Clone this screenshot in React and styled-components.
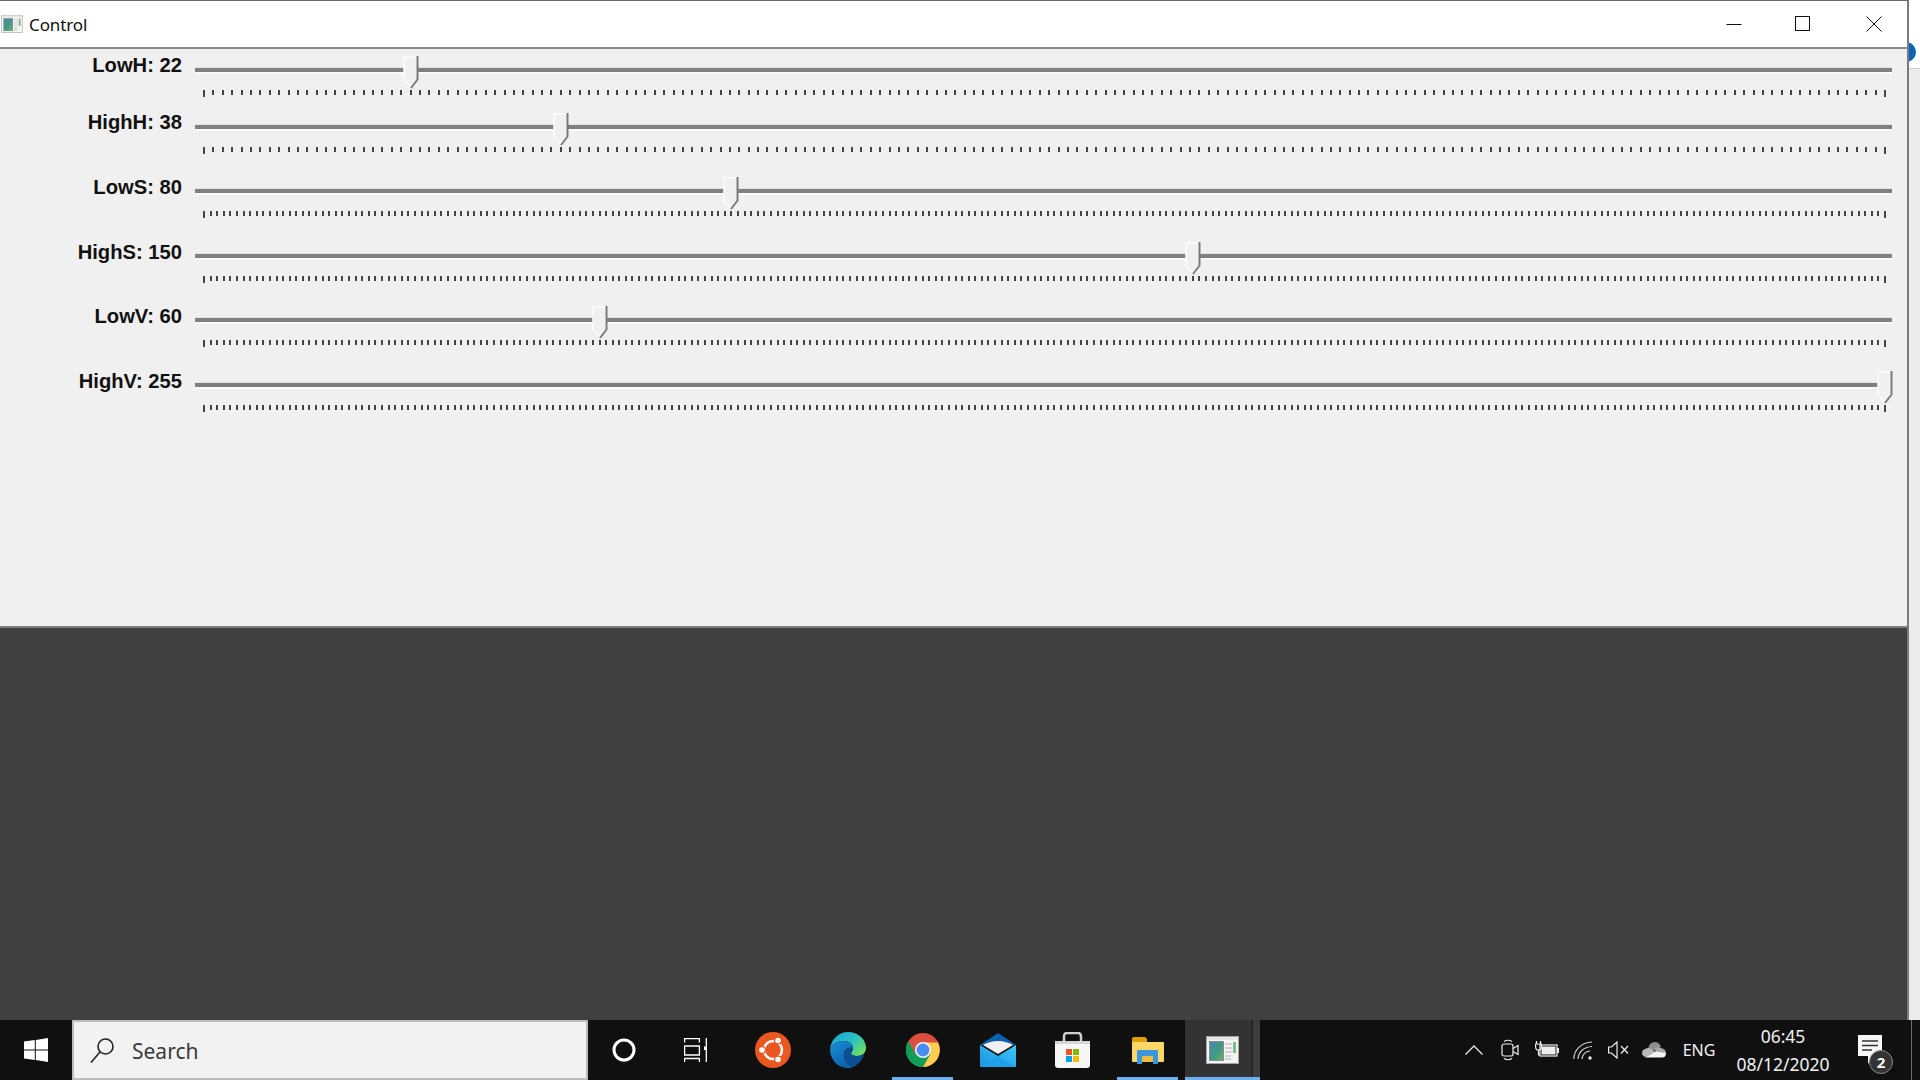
import React from "react";
import styled, { createGlobalStyle } from "styled-components";

const Global = createGlobalStyle`
  html, body { margin: 0; padding: 0; background: #eeeeee; }
  #root { width: 1920px; height: 1080px; overflow: hidden; }
`;

const Screen = styled.div`
  width: 1920px; height: 1080px; display: flex; flex-direction: column;
  font-family: "Noto Sans", "Open Sans", sans-serif;
`;
const Desktop = styled.div`flex: 1; min-height: 0; display: flex;`;
const Win = styled.div`
  width: 1909px; display: flex; flex-direction: column;
  border-top: 1px solid #6a6a6a; border-right: 2px solid #7b7b7b; box-sizing: border-box;
`;
const TitleBar = styled.div`
  height: 46px; flex: none; background: #fff; display: flex; align-items: center;
  border-bottom: 2px solid #8a8a8a;
`;
const AppGlyph = styled.div`margin: 0 6px 0 1px; width: 22px; height: 18px; display: flex;`;
const Title = styled.span`font-size: 17px; color: #111; letter-spacing: -0.1px;`;
const WinControls = styled.div`margin-left: auto; display: flex; height: 100%;`;
const WinButton = styled.div`
  width: ${p => p.$w}px; display: flex; align-items: center; justify-content: center;
`;
const Controls = styled.div`
  height: 579px; flex: none; background: #f0f0f0; box-sizing: border-box;
  border-bottom: 2px solid #7d7d7d; display: flex; flex-direction: column;
`;
const Row = styled.div`
  height: ${p => p.$h}px; flex: none; display: flex; align-items: flex-start;
`;
const Label = styled.div`
  width: 182px; margin-top: ${p => p.$top}px; text-align: right; flex: none;
  font: bold 20.2px/24px "Liberation Sans", Arial, sans-serif; color: #111;
`;
const Slider = styled.div`
  position: relative; margin-left: 13px; width: 1697px; height: 100%;
  display: flex; flex-direction: column;
`;
const Track = styled.div`
  margin-top: 19px; height: 4px; background: #808080; flex: none;
  box-shadow: 0 2px 0 #fbfbfb, 0 -1px 0 #e2e2e2;
`;
const TickScale = styled.svg`
  display: block; flex: none; margin: 18px 0 0 8px; width: 1683px; height: 7px;
`;
const Thumb = styled.svg`
  position: absolute; top: 7px; width: 16px; height: 33px; margin-left: -7px;
`;
const Viewport = styled.div`flex: 1; background: #404040;`;
const Gutter = styled.div`
  position: relative; flex: 1; overflow: hidden;
  background: linear-gradient(#fff 0 68px, #cfcfcf 68px 69px, #ececec 69px);
`;
const Dot = styled.div`
  position: absolute; left: -13px; top: 42px; width: 20px; height: 20px; border-radius: 50%; background: #0a63b4;
`;

const Taskbar = styled.div`
  height: 60px; flex: none; background: #101010; display: flex; align-items: stretch;
`;
const Start = styled.div`width: 72px; display: flex; align-items: center; justify-content: center;`;
const SearchBox = styled.div`
  width: 516px; box-sizing: border-box; background: #f2f2f2; border: 2px solid #bcbcbc;
  display: flex; align-items: center; padding-left: 16px; gap: 18px;
  font-size: 21px; color: #3a3a3a;
`;
const SearchText = styled.span`padding-top: 2px;`;
const Slot = styled.div`
  position: relative; width: ${p => p.$w}px; flex: none; display: flex; align-items: center; justify-content: center;
  margin-right: ${p => p.$gap || 0}px;
  background: ${p => (p.$active ? "#333333" : "transparent")};
`;
const Stripe = styled.div`position: absolute; top: 0; bottom: 0; right: 0; width: 7px; background: #3d3d3d; border-left: 2px solid #262626;`;
const Under = styled.div`
  position: absolute; bottom: 0; height: 3px; background: #6cb0f0;
  left: ${p => (p.$full ? 0 : 7)}px; right: ${p => (p.$full ? 0 : 7)}px;
`;
const Spacer = styled.div`flex: 1;`;
const EndGap = styled.div`flex: 0 0 12px;`;
const Lang = styled.span`font-size: 16px; color: #f2f2f2;`;
const Clock = styled.div`
  display: flex; flex-direction: column; align-items: center; gap: 5px; color: #f2f2f2;
  font-size: 17.5px; line-height: 23px;
`;
const Badge = styled.div`
  position: absolute; left: 28px; top: 30px; width: 24px; height: 24px; box-sizing: border-box; border-radius: 50%;
  background: #333; border: 1px solid #8a8a8a; color: #fff; font-size: 15px; font-weight: 700;
  display: flex; align-items: center; justify-content: center;
`;
const EdgeLine = styled.div`width: 1px; background: #6a6a6a; flex: none; margin-right: 8px;`;

const AppIcon = ({ w, h, id }) => (
  <svg width={w} height={h} viewBox="0 0 33 28">
    <defs>
      <linearGradient id={id} x1="0" y1="0" x2="1" y2="1">
        <stop offset="0" stopColor="#4b86ad" /><stop offset="0.55" stopColor="#3f9a86" /><stop offset="1" stopColor="#6eae68" />
      </linearGradient>
    </defs>
    <rect x="0.5" y="0.5" width="32" height="27" fill="#f4f4f4" stroke="#a5a5a5" />
    <rect x="1" y="1" width="31" height="3" fill="#e6e6e6" />
    <rect x="3" y="5" width="15" height="20" fill="#8d8d8d" />
    <rect x="4" y="6" width="13" height="18" fill={`url(#${id})`} />
    <rect x="19" y="7" width="7" height="2" fill="#d2d2d2" /><rect x="19" y="11" width="7" height="2" fill="#d2d2d2" />
    <rect x="19" y="15" width="7" height="2" fill="#d2d2d2" /><rect x="19" y="19" width="6" height="2" fill="#d2d2d2" />
    <rect x="19" y="22" width="6" height="2" fill="#d2d2d2" />
    <rect x="27" y="6" width="3" height="11" fill="#7fb98d" />
  </svg>
);

const Edge = () => (
  <svg width="36" height="36" viewBox="0 0 36 36">
    <defs>
      <linearGradient id="e1" x1="0.1" y1="0.1" x2="1" y2="0.7">
        <stop offset="0" stopColor="#1fa5d8" /><stop offset="0.55" stopColor="#2cc3c0" /><stop offset="1" stopColor="#6fdc62" />
      </linearGradient>
      <linearGradient id="e2" x1="0" y1="0" x2="0.6" y2="1">
        <stop offset="0" stopColor="#1a8fd8" /><stop offset="1" stopColor="#0b62ab" />
      </linearGradient>
    </defs>
    <path d="M0 17C1 7 9 0 18 0c10 0 18 7 18 16 0 5-4 8-9 8-3 0-6-1-6-3 0-1 2-2 2-5 0-4-4-7-9-7C7 9 2 12 0 17z" fill="url(#e1)" />
    <path d="M0 17c2-5 7-8 14-8 5 0 9 3 9 7-3-1-8 0-9 5-1 6 3 12 9 14-2 1-3 1-5 1C8 36 0 28 0 17z" fill="url(#e2)" />
    <path d="M14 21c1-5 6-6 9-5 0 3-2 4-2 5 0 2 3 3 6 3 3 0 6-1 7-2-2 8-9 14-16 14-2 0 0 0 5-1-6-2-10-8-9-14z" fill="#0c4f92" />
  </svg>
);

const Chrome = () => (
  <svg width="34" height="34" viewBox="0 0 34 34">
    <circle cx="17" cy="17" r="17" fill="#db4d3f" />
    <path d="M17 34A17 17 0 0 1 2.3 8.5L9.6 21.3 17 34z" fill="#1fa463" />
    <path d="M17 34L24.4 21.3 17 17 9.6 21.3 2.3 8.5A17 17 0 0 0 17 34z" fill="#0f9d58" />
    <path d="M17 9.5H32A17 17 0 0 1 17 34l7.5-13z" fill="#fcd04e" />
    <circle cx="17" cy="17" r="8" fill="#f3f3f3" />
    <circle cx="17" cy="17" r="6.4" fill="#4b8cf0" />
  </svg>
);

const Mail = () => (
  <svg width="36" height="34" viewBox="0 0 36 34">
    <defs>
      <linearGradient id="m1" x1="0" y1="1" x2="1" y2="0">
        <stop offset="0" stopColor="#1a93e2" /><stop offset="1" stopColor="#3cc8f8" />
      </linearGradient>
    </defs>
    <path d="M0 12L18 0l18 12z" fill="#0b62ad" />
    <path d="M3 12Q18 4 33 12L18 21z" fill="#f0f0f0" />
    <path d="M0 12l18 11L36 12v22H0z" fill="url(#m1)" />
    <path d="M0 34L18 23l18 11z" fill="#1ea0ea" />
  </svg>
);

const Store = () => (
  <svg width="35" height="36" viewBox="0 0 35 36">
    <path d="M9 11V4q0-3 3-3h11q3 0 3 3v7" fill="none" stroke="#cfcfcf" strokeWidth="2.5" />
    <path d="M0 9h35v24q0 3-3 3H3q-3 0-3-3z" fill="#f6f6f6" />
    <rect x="0" y="9" width="35" height="3" fill="#d5d5d5" />
    <rect x="11" y="17" width="6" height="6" fill="#f25325" />
    <rect x="18" y="17" width="6" height="6" fill="#80ba01" />
    <rect x="11" y="24" width="6" height="6" fill="#02a4ef" />
    <rect x="18" y="24" width="6" height="6" fill="#ffb902" />
  </svg>
);

const Folder = () => (
  <svg width="32" height="27" viewBox="0 0 32 27">
    <path d="M0 2q0-2 2-2h11l2 2v4H0z" fill="#dba106" />
    <path d="M0 5h31q1 0 1 1v18q0 1-1 1H1q-1 0-1-1z" fill="#fdd668" />
    <path d="M5 27V14q0-1 1-1h19q1 0 1 1v13h-5v-8H10v8z" fill="#3b97dd" />
    <rect x="10" y="19" width="11" height="6" fill="#f0bc3d" />
  </svg>
);

const values = [
  { name: "LowH", v: 22, max: 179, h: 57, top: 4 },
  { name: "HighH", v: 38, max: 179, h: 64, top: 4 },
  { name: "LowS", v: 80, max: 255, h: 65, top: 5 },
  { name: "HighS", v: 150, max: 255, h: 64, top: 5 },
  { name: "LowV", v: 60, max: 255, h: 65, top: 5 },
  { name: "HighV", v: 255, max: 255, h: 65, top: 5 },
];

const tickPath = max => {
  let d = "";
  for (let i = 0; i <= max; i++) {
    const x = 1 + Math.round((i / max) * 1681);
    d += `M${x} 0V${i === 0 || i === max ? 7 : 5}`;
  }
  return d;
};

const SliderRow = ({ name, v, max, h, top }) => {
  const left = 8 + (v / max) * 1681;
  return (
    <Row $h={h}>
      <Label $top={top}>{name}: {v}</Label>
      <Slider>
        <Track />
        <TickScale viewBox="0 0 1683 7">
          <path d={tickPath(max)} stroke="#444" strokeWidth="2" fill="none" />
        </TickScale>
        <Thumb viewBox="0 0 16 33" style={{ left }}>
          <path d="M1 1H14V23L8 31L1 24Z" fill="#f0f0f0" stroke="#fbfbfb" strokeWidth="1.5" />
          <path d="M14.5 0V23.5L8 32" fill="none" stroke="#7a7a7a" strokeWidth="2" />
        </Thumb>
      </Slider>
    </Row>
  );
};

export default function App() {
  return (
    <Screen>
      <Global />
      <Desktop>
        <Win>
          <TitleBar>
            <AppGlyph><AppIcon w={22} h={18} id="ai1" /></AppGlyph>
            <Title>Control</Title>
            <WinControls>
              <WinButton $w={63}>
                <svg width="16" height="16" viewBox="0 0 16 16"><path d="M0.5 8.5H15.5" stroke="#111" /></svg>
              </WinButton>
              <WinButton $w={75}>
                <svg width="16" height="16" viewBox="0 0 16 16"><rect x="0.5" y="0.5" width="14" height="14" fill="none" stroke="#111" /></svg>
              </WinButton>
              <WinButton $w={67}>
                <svg width="16" height="16" viewBox="0 0 16 16"><path d="M0.5 0.5L15.5 15.5M15.5 0.5L0.5 15.5" stroke="#111" /></svg>
              </WinButton>
            </WinControls>
          </TitleBar>
          <Controls>
            {values.map(r => <SliderRow key={r.name} {...r} />)}
          </Controls>
          <Viewport />
        </Win>
        <Gutter><Dot /></Gutter>
      </Desktop>
      <Taskbar>
        <Start>
          <svg width="24" height="24" viewBox="0 0 24 24" fill="#fff">
            <path d="M0 3.6L10.8 2v9.4H0zM11.8 1.9L24 0v11.4H11.8zM0 12.5h10.8V22L0 20.4zM11.8 12.5H24V24l-12.2-1.9z" />
          </svg>
        </Start>
        <SearchBox>
          <svg width="24" height="25" viewBox="0 0 24 25" fill="none" stroke="#222" strokeWidth="1.6">
            <circle cx="15.5" cy="8.5" r="7.5" />
            <path d="M10 14L1 24.5" />
          </svg>
          <SearchText>Search</SearchText>
        </SearchBox>
        <Slot $w={72}>
          <svg width="24" height="24" viewBox="0 0 24 24"><circle cx="12" cy="12" r="10" fill="none" stroke="#fff" strokeWidth="3" /></svg>
        </Slot>
        <Slot $w={71} $gap={4}>
          <svg width="23" height="24" viewBox="0 0 23 24" fill="none" stroke="#fff" strokeWidth="1.3">
            <path d="M0.6 4.5V0.7H15.4V4.5M0.6 8H15.4V17H0.6ZM0.6 24V20.5H15.4V24M22.3 0V24" />
            <rect x="20" y="8.5" width="3" height="3.5" fill="#fff" stroke="none" />
          </svg>
        </Slot>
        <Slot $w={75}>
          <svg width="36" height="36" viewBox="0 0 36 36">
            <circle cx="18" cy="18" r="18" fill="#ea5720" />
            <circle cx="18" cy="18" r="9" fill="none" stroke="#fff" strokeWidth="2.6" />
            <circle cx="23" cy="8.5" r="4" fill="#ea5720" />
            <circle cx="23" cy="27.5" r="4" fill="#ea5720" />
            <circle cx="7" cy="18" r="4" fill="#ea5720" />
            <circle cx="23" cy="8.5" r="2.8" fill="#fff" />
            <circle cx="23" cy="27.5" r="2.8" fill="#fff" />
            <circle cx="7" cy="18" r="2.8" fill="#fff" />
          </svg>
        </Slot>
        <Slot $w={75}><Edge /></Slot>
        <Slot $w={75}><Chrome /><Under /></Slot>
        <Slot $w={75}><Mail /></Slot>
        <Slot $w={75}><Store /></Slot>
        <Slot $w={75}><Folder /><Under /></Slot>
        <Slot $w={75} $active><AppIcon w={33} h={28} id="ai2" /><Stripe /><Under $full /></Slot>
        <Spacer />
        <Slot $w={36}>
          <svg width="18" height="10" viewBox="0 0 18 10" fill="none" stroke="#e8e8e8" strokeWidth="1.3"><path d="M0.5 9.5L9 1l8.5 8.5" /></svg>
        </Slot>
        <Slot $w={36}>
          <svg width="18" height="22" viewBox="0 0 18 22" fill="none" stroke="#eee" strokeWidth="1.2">
            <rect x="1" y="5" width="11" height="12" rx="2" />
            <path d="M12 9.5L17 6.5V15.5L12 12.5M3 2.5Q7 0 11 2.5M3 19.5Q7 22 11 19.5" />
          </svg>
        </Slot>
        <Slot $w={37}>
          <svg width="24" height="18" viewBox="0 0 24 18" fill="none" stroke="#eee" strokeWidth="1.2">
            <path d="M1.5 0V3M5.5 0V3M0.6 3H6.4V6Q6.4 9 3.5 9Q0.6 9 0.6 6ZM3.5 9V14H5" />
            <rect x="5" y="4" width="17" height="11" />
            <rect x="6.5" y="5.5" width="14" height="8" fill="#eee" stroke="none" />
            <rect x="22" y="7" width="2" height="5" fill="#eee" stroke="none" />
          </svg>
        </Slot>
        <Slot $w={36}>
          <svg width="20" height="19" viewBox="0 0 20 19" fill="none" stroke="#ccc" strokeWidth="1.2">
            <path d="M0.8 18C1 9 8 1.5 19 1M5 18C5.5 11.5 10 6 19 5.5M9 18C9.5 14 12 10.5 17 10" />
            <circle cx="17" cy="17" r="1.7" fill="#eee" stroke="none" />
          </svg>
        </Slot>
        <Slot $w={34}>
          <svg width="21" height="18" viewBox="0 0 21 18" fill="none" stroke="#eee" strokeWidth="1.2">
            <path d="M0.6 6V12H3.5L9 17V1L3.5 6ZM13 5L20 12.5M20 5L13 12.5" />
          </svg>
        </Slot>
        <Slot $w={38}>
          <svg width="24" height="16" viewBox="0 0 24 16">
            <path d="M6 7Q7.5 0 13 0Q17 0 19 5L8 9.5Z" fill="#8c8c8c" />
            <path d="M3 7Q7 5 9 7L14 10L4 15Q0 14 0 11Q0 8 3 7Z" fill="#b9b9b9" />
            <path d="M12 7Q15 4 19 6Q24 7 24 11L15 11Z" fill="#a6a6a6" />
            <path d="M3 15.5L14 9.5L24 11Q24 15.5 20 15.5Z" fill="#f4f4f4" />
          </svg>
        </Slot>
        <Slot $w={52}><Lang>ENG</Lang></Slot>
        <Slot $w={116}>
          <Clock><span>06:45</span><span>08/12/2020</span></Clock>
        </Slot>
        <Slot $w={58}>
          <svg width="24" height="30" viewBox="0 0 24 30">
            <path d="M0 0H24V21H15L10 29V21H0Z" fill="#f6f6f6" />
            <path d="M4 6H20M4 10.5H20M4 15H14" stroke="#333" strokeWidth="1.4" />
          </svg>
          <Badge>2</Badge>
        </Slot>
        <EndGap />
        <EdgeLine />
      </Taskbar>
    </Screen>
  );
}
